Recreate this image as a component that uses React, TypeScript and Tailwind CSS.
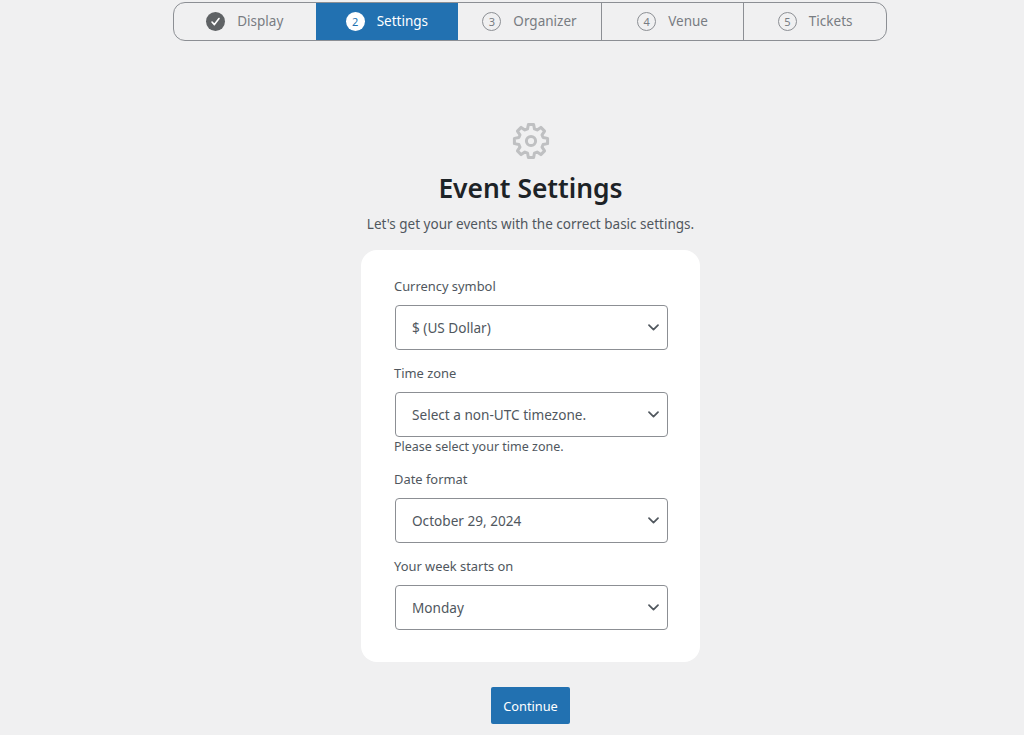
const STEPS = [
  { label: "Organizer", num: 3 },
  { label: "Venue", num: 4 },
  { label: "Tickets", num: 5 },
];

const FIELDS = [
  { label: "Currency symbol", value: "$ (US Dollar)" },
  { label: "Time zone", value: "Select a non-UTC timezone.", help: "Please select your time zone." },
  { label: "Date format", value: "October 29, 2024" },
  { label: "Your week starts on", value: "Monday" },
];

// eight rounded teeth, first one pointing straight up
function gearPoints() {
  const pts: string[] = [];
  const at = (r: number, deg: number) => {
    const a = ((deg - 90) * Math.PI) / 180;
    return `${(20 + r * Math.cos(a)).toFixed(2)},${(20 + r * Math.sin(a)).toFixed(2)}`;
  };
  for (let i = 0; i < 8; i++) {
    const c = i * 45;
    pts.push(at(12.6, c - 16), at(16.8, c - 9), at(16.8, c + 9), at(12.6, c + 16));
  }
  return pts.join(" ");
}

function Chevron() {
  return (
    <svg width="11" height="7" viewBox="0 0 11 7" fill="none" className="shrink-0">
      <path d="M1 1.2l4.5 4.4L10 1.2" stroke="#50575e" strokeWidth="1.7" strokeLinecap="round" strokeLinejoin="round" />
    </svg>
  );
}

function Gear() {
  return (
    <svg width="40" height="40" viewBox="0 0 40 40" fill="none" stroke="#bfc0c2" strokeWidth="3" strokeLinejoin="round">
      <polygon points={gearPoints()} />
      <circle cx="20" cy="20" r="4.6" />
    </svg>
  );
}

function NumberCircle({ num }: { num: number }) {
  return (
    <span className="flex h-[19px] w-[19px] items-center justify-center rounded-full border border-[#8c8f94] text-[11px] leading-none text-[#787c82]">
      {num}
    </span>
  );
}

function Field({ label, value, help }: { label: string; value: string; help?: string }) {
  return (
    <div>
      <div className="h-[20px] text-[12.9px] leading-[20px] text-[#50575e]">{label}</div>
      <div className="mt-[9px] ml-[1px] flex h-[45px] items-center justify-between rounded-[4px] border border-[#8c8f94] bg-white pl-[16px] pr-[8px] text-[13.6px] text-[#50575e]">
        <span className="pt-[2px]">{value}</span>
        <Chevron />
      </div>
      {help && <div className="mt-[1px] h-[18px] text-[12.5px] leading-[18px] text-[#50575e]">{help}</div>}
    </div>
  );
}

export default function App() {
  return (
    <div
      className="flex h-[735px] flex-col items-center overflow-hidden bg-[#f0f0f1] pl-[37px] pt-[2px]"
      style={{ fontFamily: "'Noto Sans', 'Open Sans', sans-serif" }}
    >
      <div className="mr-[1px] flex h-[39px] w-[714px] shrink-0 overflow-hidden rounded-[12px] border border-[#8c8f94] text-[13.5px] text-[#787c82]">
        <div className="flex w-[142px] items-center justify-center gap-[12px]">
          <span className="flex h-[19px] w-[19px] items-center justify-center rounded-full bg-[#5f6265]">
            <svg width="11" height="11" viewBox="0 0 11 11" fill="none">
              <path d="M2 6l2.4 2.6L9 2.5" stroke="#fff" strokeWidth="1.6" strokeLinecap="round" strokeLinejoin="round" />
            </svg>
          </span>
          <span>Display</span>
        </div>
        <div className="flex w-[143px] items-center justify-center gap-[12px] bg-[#2271b1] text-white">
          <span className="flex h-[19px] w-[19px] items-center justify-center rounded-full bg-white text-[11px] leading-none text-[#2271b1]">
            2
          </span>
          <span>Settings</span>
        </div>
        {STEPS.map((step, i) => (
          <div
            key={step.label}
            className={
              i === 0
                ? "flex w-[143px] items-center justify-center gap-[12px]"
                : "flex w-[143px] items-center justify-center gap-[12px] border-l border-[#8c8f94]"
            }
          >
            <NumberCircle num={step.num} />
            <span>{step.label}</span>
          </div>
        ))}
      </div>

      <div className="mt-[80px] flex h-[40px] items-center justify-center">
        <Gear />
      </div>
      <h1 className="mt-[8px] text-[26.4px] font-semibold leading-[38px] text-[#1d2327]">Event Settings</h1>
      <p className="mt-[7px] text-[13.5px] leading-[20px] text-[#50575e]">
        Let's get your events with the correct basic settings.
      </p>

      <div className="mt-[16px] flex h-[412px] w-[339px] shrink-0 flex-col gap-[13px] rounded-[16px] bg-white pl-[33px] pr-[32px] pt-[26px]">
        {FIELDS.map((field) => (
          <Field key={field.label} label={field.label} value={field.value} help={field.help} />
        ))}
      </div>

      <button className="mt-[25px] h-[37px] w-[79px] shrink-0 rounded-[2px] bg-[#2271b1] pt-[3px] text-[12.8px] text-white">
        Continue
      </button>
    </div>
  );
}
